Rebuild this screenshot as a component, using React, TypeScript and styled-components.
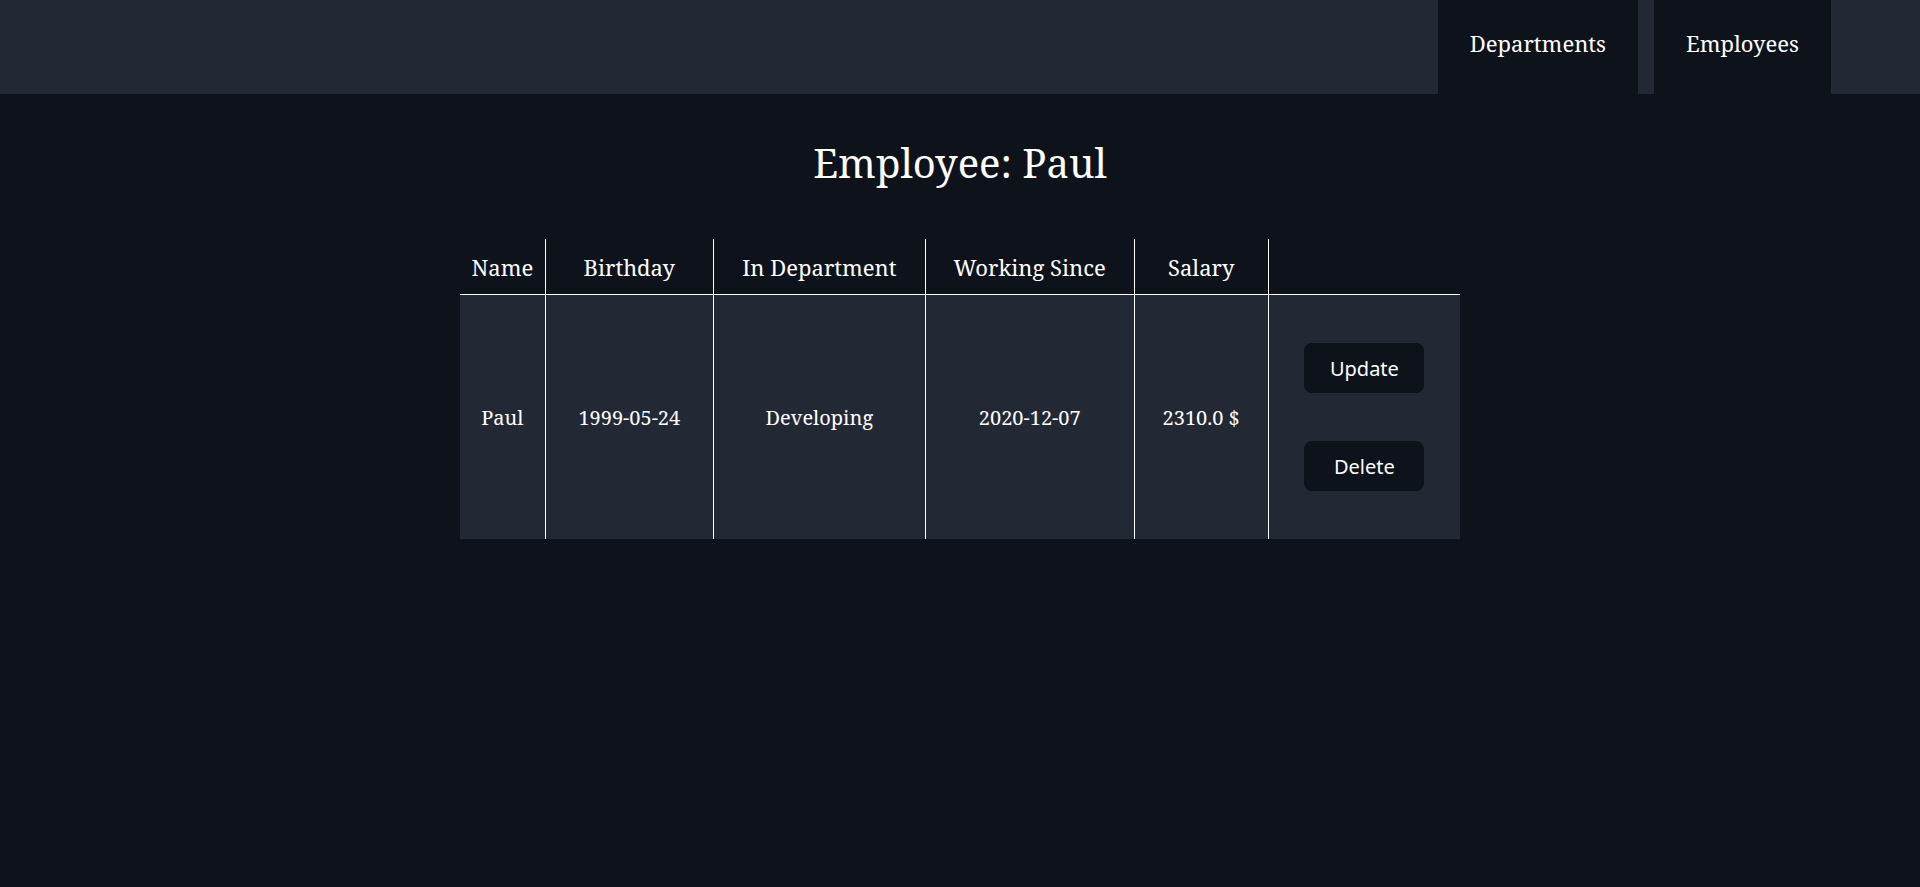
import React from 'react'
import styled, { createGlobalStyle } from 'styled-components'

const GlobalStyle = createGlobalStyle`
  html, body {
    margin: 0;
    padding: 0;
    background: #0e121b;
    color: #ffffff;
    font-family: 'Noto Serif', 'DejaVu Serif', serif;
  }
`

const Page = styled.div`
  min-height: 887px;
  background: #0e121b;
`

const NavBar = styled.nav`
  display: flex;
  justify-content: flex-end;
  gap: 16px;
  height: 94px;
  padding-right: 89px;
  background: #232835;
`

const NavLink = styled.a`
  display: flex;
  align-items: center;
  padding: 0 32px 8px;
  background: #0e121b;
  color: #ffffff;
  font-size: 22px;
  text-decoration: none;
  cursor: pointer;
`

const Content = styled.main`
  display: flex;
  flex-direction: column;
  align-items: center;
`

const Title = styled.h1`
  margin: 41px 0 49px;
  font-size: 40px;
  font-weight: normal;
`

const Table = styled.table`
  width: 1000px;
  border-collapse: collapse;
  text-align: center;
`

const HeadCell = styled.th<{ $w: number }>`
  width: ${p => p.$w}px;
  height: 55px;
  padding: 0;
  font-size: 22px;
  font-weight: normal;
  border-bottom: 1px solid #ffffff;
  & + & {
    border-left: 1px solid #ffffff;
  }
`

const Row = styled.tr`
  background: #232835;
`

const Cell = styled.td`
  padding: 0;
  font-size: 20px;
  & + & {
    border-left: 1px solid #ffffff;
  }
`

const Actions = styled.div`
  display: flex;
  flex-direction: column;
  align-items: center;
  gap: 48px;
  padding: 48px 0;
`

const ActionButton = styled.button`
  width: 120px;
  height: 50px;
  border: none;
  border-radius: 8px;
  background: #0e121b;
  color: #ffffff;
  font-family: 'Noto Sans', sans-serif;
  font-size: 20px;
  cursor: pointer;
`

const columns = [
  { label: 'Name', w: 85 },
  { label: 'Birthday', w: 168 },
  { label: 'In Department', w: 212 },
  { label: 'Working Since', w: 209 },
  { label: 'Salary', w: 134 },
  { label: '', w: 192 },
]

const employee = {
  name: 'Paul',
  birthday: '1999-05-24',
  department: 'Developing',
  since: '2020-12-07',
  salary: 2310.0,
}

const App: React.FC = () => {
  return (
    <Page>
      <GlobalStyle />
      <NavBar>
        <NavLink>Departments</NavLink>
        <NavLink>Employees</NavLink>
      </NavBar>
      <Content>
        <Title>Employee: {employee.name}</Title>
        <Table>
          <thead>
            <tr>
              {columns.map(c => (
                <HeadCell key={c.w} $w={c.w}>{c.label}</HeadCell>
              ))}
            </tr>
          </thead>
          <tbody>
            <Row>
              <Cell>{employee.name}</Cell>
              <Cell>{employee.birthday}</Cell>
              <Cell>{employee.department}</Cell>
              <Cell>{employee.since}</Cell>
              <Cell>{employee.salary.toFixed(1)} $</Cell>
              <Cell>
                <Actions>
                  <ActionButton>Update</ActionButton>
                  <ActionButton>Delete</ActionButton>
                </Actions>
              </Cell>
            </Row>
          </tbody>
        </Table>
      </Content>
    </Page>
  )
}

export default App
